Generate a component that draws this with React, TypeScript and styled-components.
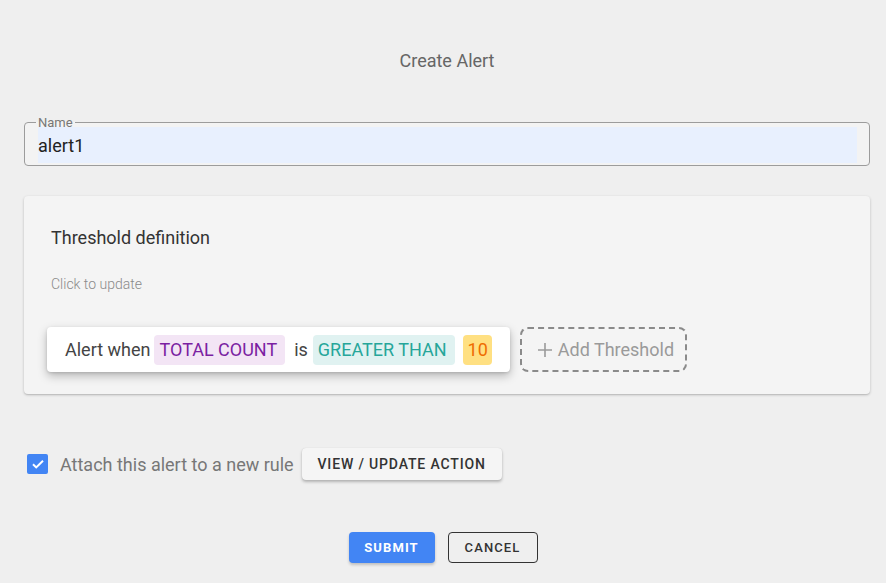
import React from "react";
import styled, { createGlobalStyle } from "styled-components";

const Global = createGlobalStyle`
  html, body { margin: 0; padding: 0; background: #efefef; }
  body { font-family: Roboto, "Liberation Sans", Arial, sans-serif; }
  * { box-sizing: border-box; }
`;

const Page = styled.div`
  padding: 49px 16px 20px 24px;
  display: flex;
  flex-direction: column;
`;

const Title = styled.h1`
  margin: 0;
  text-align: center;
  font-size: 18px;
  line-height: 24px;
  font-weight: 400;
  color: #666;
`;

const Field = styled.fieldset`
  margin: 42px 0 0;
  border: 1px solid #9c9c9c;
  border-radius: 4px;
  padding: 0 12px 2px 13px;
  background: #f3f3f3;
`;

const Legend = styled.legend`
  font-size: 13px;
  line-height: 15px;
  color: #777;
  padding: 0 2px;
  margin-left: -2px;
`;

const Input = styled.div`
  margin-top: -3px;
  height: 36px;
  background: #e8f0fe;
  font-size: 18px;
  color: #222;
  display: flex;
  align-items: center;
`;

const Card = styled.section`
  margin-top: 30px;
  background: #f4f4f4;
  border-radius: 4px;
  box-shadow: 0 1px 3px rgba(0, 0, 0, 0.2), 0 1px 1px rgba(0, 0, 0, 0.08);
  padding: 30px 27px 22px;
  display: flex;
  flex-direction: column;
`;

const CardTitle = styled.div`
  font-size: 18px;
  line-height: 24px;
  color: #333;
`;

const Hint = styled.div`
  margin-top: 25px;
  font-size: 14px;
  line-height: 18px;
  font-weight: 300;
  color: #8a8a8a;
`;

const Row = styled.div`
  margin-top: 34px;
  margin-left: -4px;
  display: flex;
  align-items: center;
  gap: 10px;
`;

const Sentence = styled.div`
  height: 45px;
  background: #fff;
  border-radius: 4px;
  box-shadow: 0 4px 10px rgba(0, 0, 0, 0.25), 0 1px 3px rgba(0, 0, 0, 0.12);
  padding: 0 18px;
  display: flex;
  align-items: center;
  font-size: 18px;
  color: #444;
`;

const Word = styled.span<{ $gapLeft: number; $gapRight: number }>`
  margin-left: ${(p) => p.$gapLeft}px;
  margin-right: ${(p) => p.$gapRight}px;
`;

const Chip = styled.span<{ $bg: string; $fg: string; $pr?: number }>`
  height: 30px;
  display: inline-flex;
  align-items: center;
  padding: 0 ${(p) => p.$pr ?? 6}px 0 5px;
  border-radius: 4px;
  background: ${(p) => p.$bg};
  color: ${(p) => p.$fg};
`;

const AddBox = styled.div`
  height: 45px;
  border: 2px dashed #8a8a8a;
  border-radius: 8px;
  padding: 0 11px 0 15px;
  display: flex;
  align-items: center;
  gap: 5px;
  font-size: 18px;
  color: #9a9a9a;
`;

const ActionRow = styled.div`
  margin-top: 54px;
  margin-left: 3px;
  display: flex;
  align-items: center;
`;

const CheckBox = styled.span`
  width: 21px;
  height: 20px;
  border-radius: 2px;
  background: #4285f4;
  display: inline-flex;
  align-items: center;
  justify-content: center;
`;

const CheckLabel = styled.span`
  margin-left: 12px;
  font-size: 18px;
  color: #777;
`;

const RaisedButton = styled.button`
  margin-left: 8px;
  height: 32px;
  width: 200px;
  padding: 0;
  border: none;
  border-radius: 4px;
  background: #f5f5f5;
  box-shadow: 0 2px 3px rgba(0, 0, 0, 0.25), 0 0 1px rgba(0, 0, 0, 0.15);
  font-family: inherit;
  font-size: 14px;
  font-weight: 500;
  letter-spacing: 0.85px;
  color: #333;
`;

const Footer = styled.div`
  margin-top: 52px;
  margin-left: -8px;
  display: flex;
  justify-content: center;
  gap: 13px;
`;

const FooterButton = styled.button<{ $primary?: boolean }>`
  height: 31px;
  min-width: ${(p) => (p.$primary ? 86 : 90)}px;
  padding: 0 15px;
  border-radius: 4px;
  font-family: inherit;
  font-size: 13px;
  letter-spacing: 1.1px;
  font-weight: ${(p) => (p.$primary ? 700 : 500)};
  color: ${(p) => (p.$primary ? "#fff" : "#333")};
  background: ${(p) => (p.$primary ? "#4285f4" : "transparent")};
  border: ${(p) => (p.$primary ? "none" : "1px solid #333")};
  box-shadow: ${(p) => (p.$primary ? "0 2px 3px rgba(0,0,0,0.2)" : "none")};
`;

export default function App() {
  return (
    <>
      <Global />
      <Page>
        <Title>Create Alert</Title>
        <Field>
          <Legend>Name</Legend>
          <Input>alert1</Input>
        </Field>
        <Card>
          <CardTitle>Threshold definition</CardTitle>
          <Hint>Click to update</Hint>
          <Row>
            <Sentence>
              <Word $gapLeft={0} $gapRight={4}>Alert when</Word>
              <Chip $bg="#f3e5f5" $fg="#7b1fa2" $pr={8}>TOTAL COUNT</Chip>
              <Word $gapLeft={9} $gapRight={5}>is</Word>
              <Chip $bg="#e0f2f1" $fg="#26a69a" $pr={8}>GREATER THAN</Chip>
              <Word $gapLeft={8} $gapRight={0} />
              <Chip $bg="#ffe082" $fg="#ef6c00" $pr={4}>10</Chip>
            </Sentence>
            <AddBox>
              <svg width="16" height="16" viewBox="0 0 16 16">
                <path d="M8 1v14M1 8h14" stroke="#9a9a9a" strokeWidth="1.6" />
              </svg>
              Add Threshold
            </AddBox>
          </Row>
        </Card>
        <ActionRow>
          <CheckBox>
            <svg width="16" height="16" viewBox="0 0 16 16">
              <path d="M3 8.3l3.2 3.1L13 4.7" fill="none" stroke="#fff" strokeWidth="2" />
            </svg>
          </CheckBox>
          <CheckLabel>Attach this alert to a new rule</CheckLabel>
          <RaisedButton>VIEW / UPDATE ACTION</RaisedButton>
        </ActionRow>
        <Footer>
          <FooterButton $primary>SUBMIT</FooterButton>
          <FooterButton>CANCEL</FooterButton>
        </Footer>
      </Page>
    </>
  );
}
